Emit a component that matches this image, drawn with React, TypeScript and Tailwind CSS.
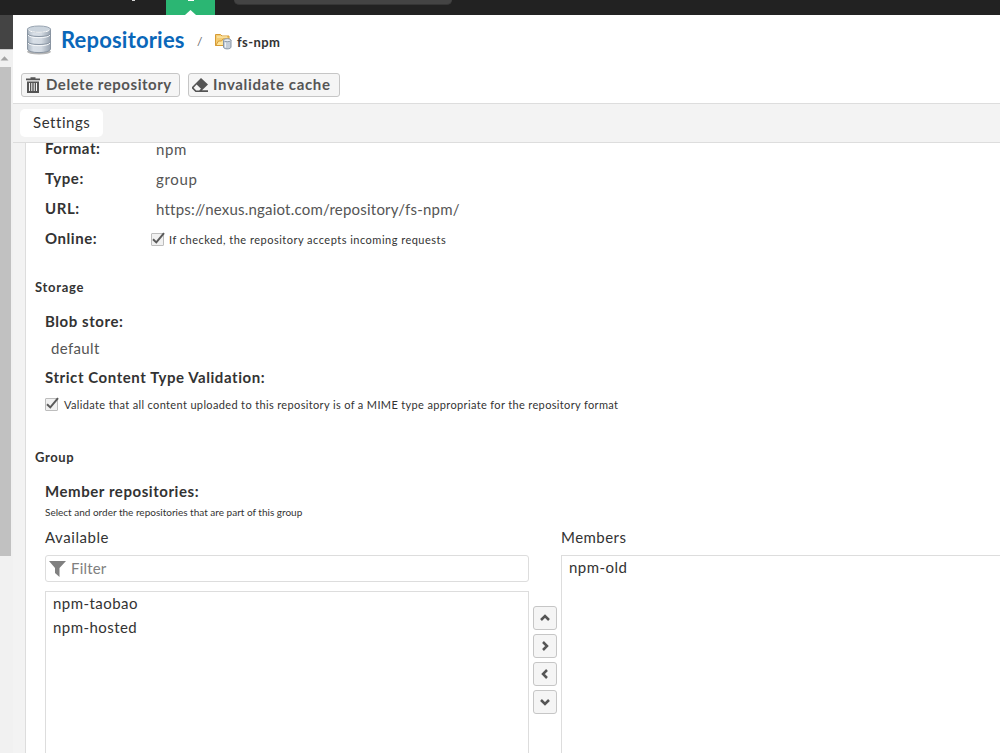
import type { ReactNode } from "react";

function Check() {
  return (
    <svg width="15" height="15" viewBox="0 0 15 15" className="shrink-0">
      <rect x="0.5" y="1.5" width="12" height="12" rx="0.5" fill="#f1f1f1" stroke="#bdbdbd" />
      <path d="M2 7.2 L5.3 10.4 L13 1.2" fill="none" stroke="#5a5a5a" strokeWidth="2" />
    </svg>
  );
}

function Database() {
  return (
    <svg width="26" height="30" viewBox="0 0 26 30" className="shrink-0">
      <defs>
        <linearGradient id="metal" x1="0" x2="1">
          <stop offset="0" stopColor="#a9b4c0" />
          <stop offset="0.25" stopColor="#d8dfe7" />
          <stop offset="0.6" stopColor="#d3dae2" />
          <stop offset="1" stopColor="#97a2af" />
        </linearGradient>
      </defs>
      <ellipse cx="13" cy="26.8" rx="12" ry="2.6" fill="#b5b5b5" />
      <path d="M1.500 4v20c0 4.800 23 4.800 23 0V4z" fill="url(#metal)" stroke="#8a95a2" />
      <path d="M1.500 8.500c0 4 23 4 23 0M1.500 16.500c0 4 23 4 23 0" fill="none" stroke="#8793a1" strokeWidth="1.2" />
      <path d="M2 10c1 3.600 21 3.600 22 0M2 18c1 3.600 21 3.600 22 0" fill="none" stroke="#f6f8fa" />
      <ellipse cx="13" cy="4.200" rx="11.500" ry="3.200" fill="#cbd4dd" stroke="#98a4b1" />
      <path d="M2.500 5c2 3 19 3 21 0" fill="none" stroke="#fff" />
    </svg>
  );
}

function FolderDb() {
  return (
    <svg width="17" height="17" viewBox="0 0 17 17" className="shrink-0">
      <path d="M.5 12.500V1.500h5l1.500 1.500h7v9.500z" fill="#f5cc73" stroke="#d69b35" />
      <path d="M2 4h10" stroke="#fff0bd" />
      <path d="M.7 12.500L3.500 8h3l1.500-2h6.500l-1 6.500z" fill="#ffe69c" stroke="#d69b35" />
      <path d="M8.500 7v7c0 2.500 7.500 2.500 7.500 0V7z" fill="#c4ced9" stroke="#8795a5" />
      <ellipse cx="12.250" cy="7.200" rx="3.750" ry="1.500" fill="#e8edf2" stroke="#8f9cab" />
      <path d="M10.500 9.500v5" stroke="#eef2f5" />
    </svg>
  );
}

function Trash() {
  return (
    <svg width="14" height="16" viewBox="0 0 14 16" className="shrink-0" fill="#555">
      <path d="M0 1.500h4.500V.3h5v1.200H14V3.200H0z" />
      <path fillRule="evenodd" d="M1 4.500h12V16H1zM3 6v8h1V6zM5.300 6v8h1V6zM7.700 6v8h1V6zM10 6v8h1V6z" />
    </svg>
  );
}

function Eraser() {
  return (
    <svg width="17" height="14" viewBox="0 0 17 14" className="shrink-0" fill="#555">
      <path fillRule="evenodd" d="M9 0L16 6.500L10 12.300H16V14H3.500L0 10.500V9zM4.600 6.600L1.600 9.700L4.200 12.400H7.200L9 10.700z" />
    </svg>
  );
}

const chevrons = ["M2 8L6 4L10 8", "M4 2L8 6L4 10", "M8 2L4 6L8 10", "M2 4L6 8L10 4"];

function Label({ children, className = "" }: { children: ReactNode; className?: string }) {
  return (
    <div className={`h-5 text-[15px] leading-[18px] font-bold tracking-[0.56px] whitespace-nowrap text-[#333] ${className}`}>
      {children}
    </div>
  );
}

function Row({ label, children }: { label: ReactNode; children: ReactNode }) {
  return (
    <div className="flex h-[30px] items-center pl-[19px]">
      <Label className="w-[111px] shrink-0">{label}</Label>
      {children}
    </div>
  );
}

export default function App() {
  return (
    <div className="flex h-[753px] w-[1000px] flex-col overflow-hidden bg-white font-['Lato',sans-serif] text-[15px] tracking-[0.45px] text-[#333]">
      <div className="flex h-[15px] shrink-0 bg-[#222]">
        <div className="flex w-[166px] justify-end pr-[31px]">
          <div className="h-px w-[3px] bg-[#d4d4d4]" />
        </div>
        <div className="flex w-[49px] flex-col items-center justify-between bg-[#2bb673]">
          <div className="h-px w-[6px] bg-white" />
          <svg width="11" height="5" viewBox="0 0 11 5" className="-ml-px"><path d="M0 5L5.500 0L11 5z" fill="#fff" /></svg>
        </div>
        <div className="ml-[19px] h-[5px] w-[218px] rounded-b-[8px] border-b border-[#363636] bg-[#444]" />
      </div>

      <div className="flex min-h-0 flex-1">
        <div className="flex w-[13px] shrink-0 flex-col bg-[#f1f1f1]">
          <div className="h-[34px] bg-[#444]" />
          <div className="flex h-[18px] items-center border-t border-[#ccc]">
            <svg width="9" height="5" viewBox="0 0 9 5"><path d="M.5 4.500L4.500.2L8.500 4.500z" fill="#a3a3a3" /></svg>
          </div>
          <div className="h-[489px] w-[11px] bg-[#c1c1c1]" />
        </div>

        <div className="flex min-w-0 flex-1 flex-col">
          <div className="h-[88px] shrink-0">
            <div className="flex h-[50px] items-center pl-[13px]">
              <Database />
              <div className="ml-[9px] w-[123px] text-[22px] leading-6 font-bold tracking-[0.18px] whitespace-nowrap text-[#0a67b9]">Repositories</div>
              <div className="mt-[3px] ml-[13px] w-[4px] text-[12px] text-[#666]">/</div>
              <div className="mt-[2px] ml-[14px]"><FolderDb /></div>
              <div className="mt-[5px] ml-[5px] text-[13px] font-bold tracking-[0.4px] whitespace-nowrap">fs-npm</div>
            </div>
            <div className="mt-[8px] flex gap-2 pl-2">
              <button className="flex h-6 w-[159px] items-center rounded-[3px] border border-[#c6c6c6] bg-[#f5f5f5] pl-1 font-bold whitespace-nowrap text-[#555]">
                <Trash /><span className="mb-[2px] ml-[6px] text-[15px] tracking-[0.53px]">Delete repository</span>
              </button>
              <button className="flex h-6 w-[152px] items-center rounded-[3px] border border-[#c6c6c6] bg-[#f5f5f5] pl-[3px] font-bold whitespace-nowrap text-[#555]">
                <Eraser /><span className="mb-[2px] ml-1 text-[15px] tracking-[0.65px]">Invalidate cache</span>
              </button>
            </div>
          </div>

          <div className="flex h-10 shrink-0 items-center border-y border-[#ddd] bg-[#f3f3f3] pl-[7px]">
            <div className="h-7 w-[83px] rounded-[5px] bg-white pl-[13px] text-[15px] leading-[26px] tracking-[0.55px]">Settings</div>
          </div>

          <div className="flex min-h-0 flex-1 bg-[#f3f3f3] pl-3">
            <div className="min-w-0 flex-1 overflow-hidden border-l border-[#ddd] bg-white">
              <div className="-mt-[9px]">
                <Row label="Format:"><span className="tracking-[0.6px] text-[#555]">npm</span></Row>
                <Row label="Type:"><span className="tracking-[0.65px] text-[#555]">group</span></Row>
                <Row label="URL:"><span className="tracking-[0.21px] whitespace-nowrap text-[#555]">https://nexus.ngaiot.com/repository/fs-npm/</span></Row>
                <Row label="Online:">
                  <div className="-ml-[5px] flex items-center gap-[3px]"><Check /><span className="mt-[2px] text-[11px] tracking-[0.49px] whitespace-nowrap">If checked, the repository accepts incoming requests</span></div>
                </Row>
              </div>
              <h2 className="mt-[23px] ml-[9px] h-5 text-[13px] leading-5 font-bold tracking-[0.7px]">Storage</h2>
              <div className="mt-[15px] pl-[19px]">
                <Label>Blob store:</Label>
                <div className="mt-[7px] h-5 pl-[6px] leading-[18px] tracking-[0.35px] text-[#555]">default</div>
                <Label className="mt-[9px]">Strict Content Type Validation:</Label>
                <div className="mt-[6px] flex h-5 items-center gap-1"><Check /><span className="mt-[2px] text-[11px] tracking-[0.355px] whitespace-nowrap">Validate that all content uploaded to this repository is of a MIME type appropriate for the repository format</span></div>
              </div>
              <h2 className="mt-[33px] ml-[9px] h-5 text-[13px] leading-5 font-bold tracking-[0.6px]">Group</h2>
              <div className="mt-[15px] pl-[19px]">
                <Label>Member repositories:</Label>
                <div className="mt-px h-5 text-[10px] leading-[18px] tracking-normal whitespace-nowrap">Select and order the repositories that are part of this group</div>
                <div className="mt-[5px] flex">
                  <div className="w-[484px] shrink-0">
                    <div className="h-5 leading-[18px] tracking-[0.55px]">Available</div>
                    <div className="mt-[7px] flex h-[27px] items-center rounded-[3px] border border-[#ddd] pl-[3px] text-[#808080]">
                      <svg width="17" height="16" viewBox="0 0 17 16"><path d="M0 0H17L10.500 7V16L6 12V7z" fill="#808080" /></svg>
                      <span className="ml-[5px] tracking-[0.2px]">Filter</span>
                    </div>
                    <div className="mt-[9px] h-[220px] border border-[#ddd] pl-[7px] leading-6">
                      <div className="-mt-px">npm-taobao</div>
                      <div>npm-hosted</div>
                    </div>
                  </div>
                  <div className="mx-1 flex w-6 shrink-0 flex-col gap-1 pt-[78px]">
                    {chevrons.map((d) => (
                      <button key={d} className="flex h-6 w-6 items-center justify-center rounded-[3px] border border-[#c6c6c6] bg-[#f5f5f5]">
                        <svg width="12" height="12" viewBox="0 0 12 12"><path d={d} fill="none" stroke="#555" strokeWidth="2.500" /></svg>
                      </button>
                    ))}
                  </div>
                  <div className="w-[480px] shrink-0">
                    <div className="h-5 leading-[18px]">Members</div>
                    <div className="mt-[7px] h-[260px] border border-[#ddd] pl-[7px] leading-6">
                      <div className="-mt-px">npm-old</div>
                    </div>
                  </div>
                </div>
              </div>
            </div>
          </div>
        </div>
      </div>
    </div>
  );
}
